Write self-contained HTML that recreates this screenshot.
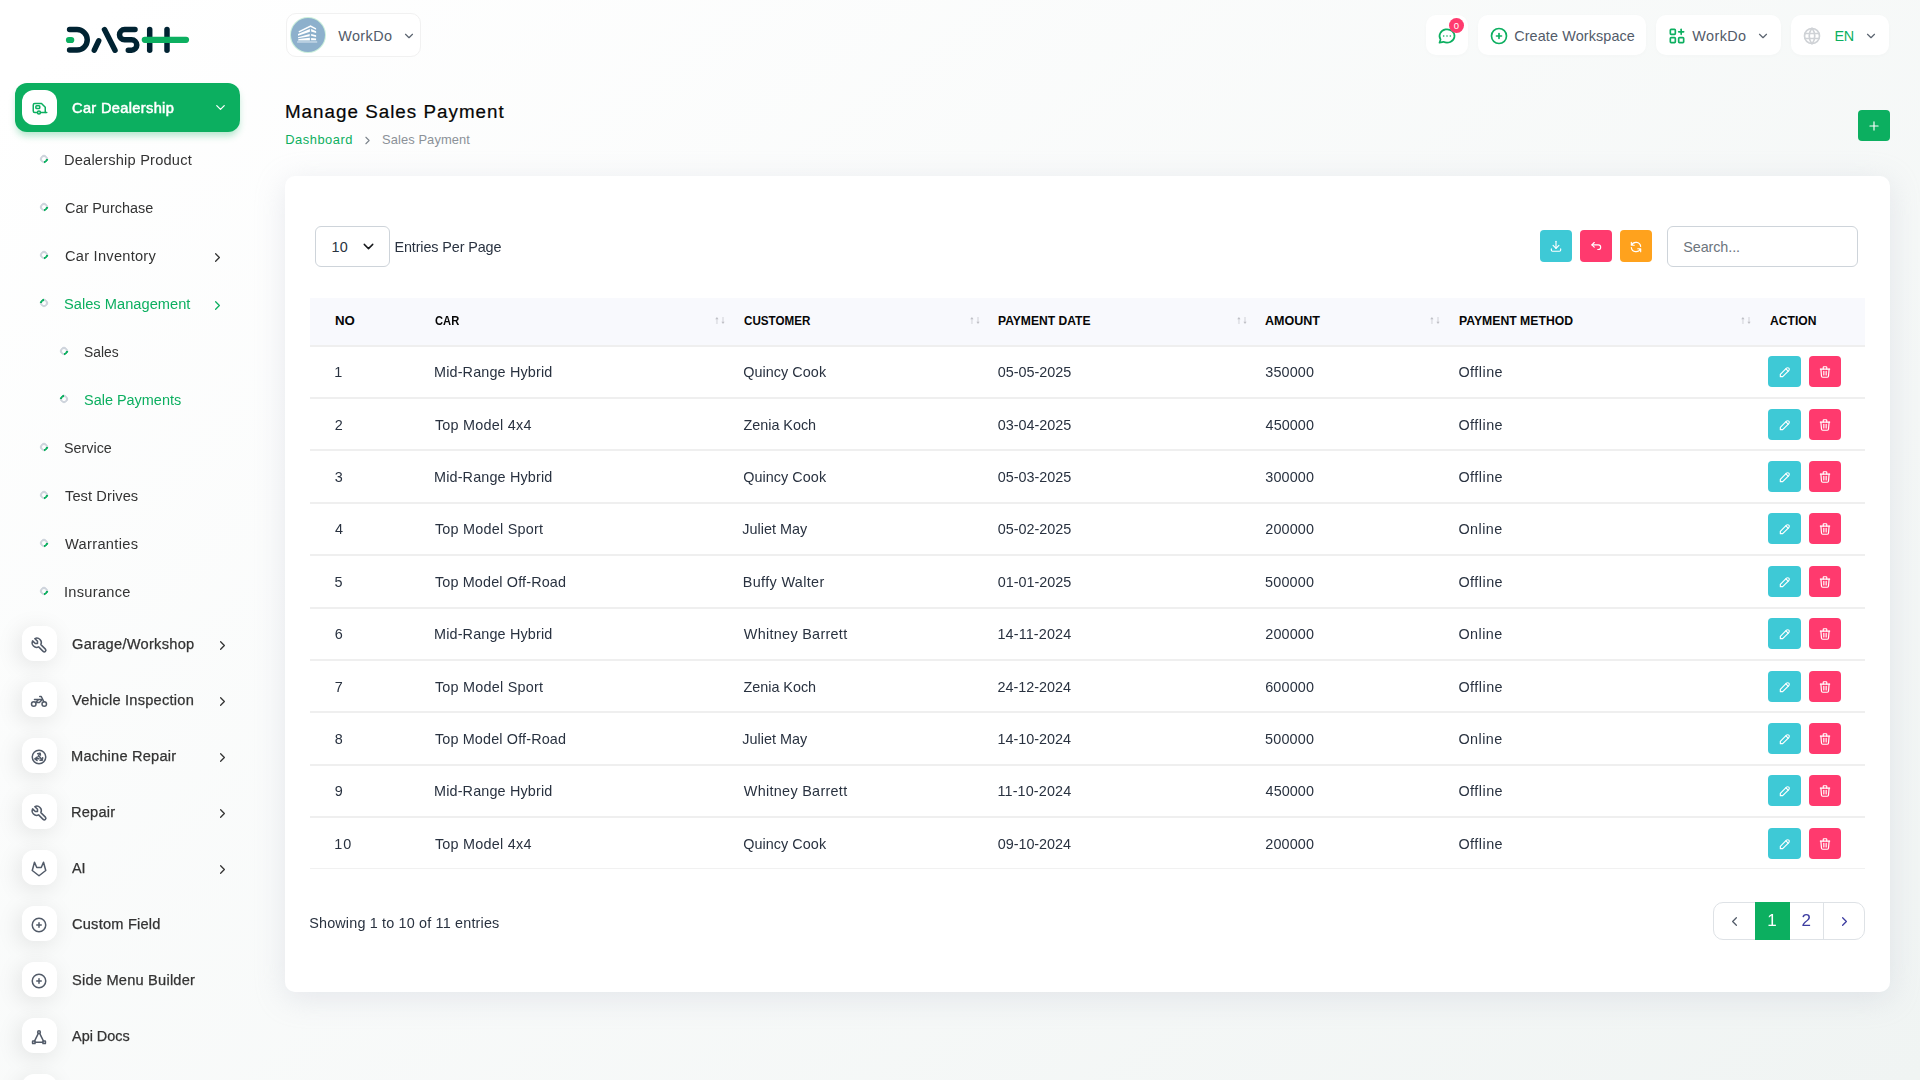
<!DOCTYPE html>
<html lang="en">
<head>
<meta charset="utf-8">
<title>Manage Sales Payment</title>
<style>
*{box-sizing:border-box;margin:0;padding:0}
html,body{width:1920px;height:1080px;overflow:hidden}
body{font-family:"Liberation Sans",sans-serif;font-size:14px;color:#293240;background:#fff;position:relative}
.bg{position:absolute;left:0;top:0;width:1920px;height:1080px;background:linear-gradient(141.55deg,rgba(240,244,243,0) 3.46%,#f0f4f3 99.86%)}
svg{display:block}
.ic{fill:none;stroke:currentColor;stroke-width:2;stroke-linecap:round;stroke-linejoin:round;position:absolute}
.t{position:absolute;white-space:nowrap;line-height:20px;height:20px;transform-origin:0 50%}
.logo{position:absolute;left:56px;top:16px}
.active-top{position:absolute;left:15px;top:83.4px;width:225px;height:48.2px;border-radius:12px;background:#0caf60;box-shadow:0 5px 7px -1px rgba(12,175,96,.3)}
.micon{position:absolute;left:22px;width:35px;height:35px;border-radius:12px;background:#fff;box-shadow:-3px 4px 23px rgba(0,0,0,.1);color:#525b69}
.nav-b{color:#333;font-size:14px;-webkit-text-stroke:.25px #333}
.nav-s{color:#333;font-size:14px}
.bul{position:absolute;width:8px;height:8px;border-radius:50%;border:2px solid #ced4dc;border-right-color:#0caf60;transform:rotate(45deg)}
.bul.on{transform:rotate(225deg)}
.green{color:#0caf60 !important}
.hbtn{position:absolute;top:14.6px;height:40.7px;border-radius:10px;background:#fff;box-shadow:0 1px 4px rgba(0,0,0,.02)}
.hd{color:#525b69;font-size:14.4px}
.card{position:absolute;left:285px;top:176px;width:1605px;height:816px;border-radius:10px;background:#fff;box-shadow:0 6px 30px rgba(182,186,203,.3)}
.sq{position:absolute;border-radius:4px;color:#fff}
.teal{background:#3ec9d6}.pink{background:#ff3a6e}.orange{background:#ffa21d}.gr{background:#0caf60}
.thead{position:absolute;left:310px;top:298px;width:1555px;height:47px;background:#f8f9fd}
.th{font-weight:bold;font-size:12px;color:#060606}
.line{position:absolute;left:310px;width:1555px;height:2px;background:#efefef}
.td{color:#293240;font-size:14.4px}
.sort{position:absolute}
</style>
</head>
<body>
<div class="bg"></div>
<!-- SIDEBAR -->
<div style="position:absolute;left:0;top:0;width:280px;height:1080px;will-change:transform">
<svg class="logo" width="144" height="48" viewBox="56 16 144 48" fill="none" stroke-linecap="round" stroke-linejoin="round">
<g stroke="#002332" stroke-width="5.5">
<path d="M69.6 29.6H77a10.25 10.25 0 0 1 0 20.5H69.6"/>
<path d="M98.7 40.8L94.3 50.2"/><path d="M104.5 29.6L115 50.2"/>
<path d="M135 29.6H124.6a5.1 5.1 0 0 0 0 10.2h7a5.2 5.2 0 0 1 0 10.4H128.3"/>
<path d="M149.7 29.6V50.2"/><path d="M167 29.6V50.2"/>
</g>
<g stroke="#0caf60" stroke-width="6.2"><path d="M69 40H71.2"/><path d="M144.8 39.8H186"/></g>
</svg>
<div class="active-top"></div>
<div class="micon" style="top:90px;box-shadow:none;color:#0caf60"><svg class="ic" viewBox="0 0 24 24" width="18" height="18" style="left:8.9px;top:9.1px;"><circle cx="10.6" cy="18" r="2"/><path d="M12.6 18H21"/><path d="M8.6 18H5a2 2 0 0 1 -2 -2V8a2 2 0 0 1 2 -2h9l5 5v7"/><rect x="6.5" y="9" width="5.2" height="3.5" rx="1"/></svg></div>
<div class="t nav-b" style="left:72.18px;top:97.8px;letter-spacing:0.311px;transform:scaleX(1.0450);color:#fff;-webkit-text-stroke:.5px #fff">Car Dealership</div>
<svg class="ic" viewBox="0 0 24 24" width="15" height="15" style="left:212.5px;top:100.0px;color:#fff"><path d="M6 9l6 6l6 -6"/></svg>
<div class="bul" style="left:40px;top:155px"></div>
<div class="t nav-s" style="left:64.34px;top:150.2px;letter-spacing:0.185px;transform:scaleX(1.0450);">Dealership Product</div>
<div class="bul" style="left:40px;top:203px"></div>
<div class="t nav-s" style="left:64.58px;top:198.2px;transform:scaleX(1.0299);">Car Purchase</div>
<div class="bul" style="left:40px;top:251px"></div>
<div class="t nav-s" style="left:64.57px;top:246.2px;letter-spacing:0.236px;transform:scaleX(1.0450);">Car Inventory</div>
<svg class="ic" viewBox="0 0 24 24" width="15" height="15" style="left:209.5px;top:249.5px;color:#333"><path d="M9 6l6 6l-6 6"/></svg>
<div class="bul on" style="left:40px;top:299px"></div>
<div class="t nav-s green" style="left:64.40px;top:294.2px;letter-spacing:0.021px;transform:scaleX(1.0450);">Sales Management</div>
<svg class="ic" viewBox="0 0 24 24" width="15" height="15" style="left:209.5px;top:297.5px;color:#0caf60"><path d="M9 6l6 6l-6 6"/></svg>
<div class="bul" style="left:60px;top:347px"></div>
<div class="t nav-s" style="left:84.43px;top:342.2px;transform:scaleX(0.9871);">Sales</div>
<div class="bul on" style="left:60px;top:395px"></div>
<div class="t nav-s green" style="left:84.42px;top:390.2px;transform:scaleX(1.0318);">Sale Payments</div>
<div class="bul" style="left:40px;top:443px"></div>
<div class="t nav-s" style="left:64.40px;top:438.2px;transform:scaleX(1.0237);">Service</div>
<div class="bul" style="left:40px;top:491px"></div>
<div class="t nav-s" style="left:65.18px;top:486.2px;letter-spacing:0.080px;transform:scaleX(1.0450);">Test Drives</div>
<div class="bul" style="left:40px;top:539px"></div>
<div class="t nav-s" style="left:65.31px;top:534.2px;letter-spacing:0.296px;transform:scaleX(1.0450);">Warranties</div>
<div class="bul" style="left:40px;top:587px"></div>
<div class="t nav-s" style="left:64.15px;top:582.2px;letter-spacing:0.265px;transform:scaleX(1.0450);">Insurance</div>
<div class="micon" style="top:626.1px"><svg class="ic" viewBox="0 0 24 24" width="18" height="18" style="left:8.4px;top:10.0px;"><path d="M7 10h3v-3l-3.5 -3.5a6 6 0 0 1 8 8l6 6a2 2 0 0 1 -3 3l-6 -6a6 6 0 0 1 -8 -8l3.5 3.5"/></svg></div>
<div class="t nav-b" style="left:71.77px;top:634.4px;letter-spacing:0.255px;transform:scaleX(1.0450);">Garage/Workshop</div>
<svg class="ic" viewBox="0 0 24 24" width="15" height="15" style="left:214.5px;top:637.5px;color:#333"><path d="M9 6l6 6l-6 6"/></svg>
<div class="micon" style="top:682.1px"><svg class="ic" viewBox="0 0 24 24" width="18" height="18" style="left:8.4px;top:10.0px;"><circle cx="5" cy="16" r="3"/><circle cx="19" cy="16" r="3"/><path d="M7.5 14h5l4 -4h-10.5m1.5 4l4 -4"/><path d="M13 6h2l1.5 3l2 4"/></svg></div>
<div class="t nav-b" style="left:72.48px;top:690.4px;letter-spacing:0.217px;transform:scaleX(1.0450);">Vehicle Inspection</div>
<svg class="ic" viewBox="0 0 24 24" width="15" height="15" style="left:214.5px;top:693.5px;color:#333"><path d="M9 6l6 6l-6 6"/></svg>
<div class="micon" style="top:738.1px"><svg class="ic" viewBox="0 0 24 24" width="18" height="18" style="left:8.4px;top:10.0px;"><circle cx="12" cy="12" r="9"/><path d="M10.5 12L13 7.4"/><path d="M10.2 7.6l3.3 -.7l.4 2.6" fill="currentColor"/><path d="M12.8 11.6L16 15.6"/><path d="M16.9 13l-.6 3.3l-3 .1" fill="currentColor"/><path d="M12 14.4H7"/><path d="M9.4 16.7L6.6 14.5l2.5 -2" fill="currentColor"/></svg></div>
<div class="t nav-b" style="left:71.47px;top:746.4px;letter-spacing:0.197px;transform:scaleX(1.0450);">Machine Repair</div>
<svg class="ic" viewBox="0 0 24 24" width="15" height="15" style="left:214.5px;top:749.5px;color:#333"><path d="M9 6l6 6l-6 6"/></svg>
<div class="micon" style="top:794.1px"><svg class="ic" viewBox="0 0 24 24" width="18" height="18" style="left:8.4px;top:10.0px;"><path d="M7 10h3v-3l-3.5 -3.5a6 6 0 0 1 8 8l6 6a2 2 0 0 1 -3 3l-6 -6a6 6 0 0 1 -8 -8l3.5 3.5"/></svg></div>
<div class="t nav-b" style="left:71.47px;top:802.4px;letter-spacing:0.180px;transform:scaleX(1.0450);">Repair</div>
<svg class="ic" viewBox="0 0 24 24" width="15" height="15" style="left:214.5px;top:805.5px;color:#333"><path d="M9 6l6 6l-6 6"/></svg>
<div class="micon" style="top:850.1px"><svg class="ic" viewBox="0 0 24 24" width="18" height="18" style="left:8.4px;top:10.0px;"><path d="M21 14l-9 7l-9 -7l3 -11l3 7h6l3 -7z"/></svg></div>
<div class="t nav-b" style="left:72.37px;top:858.4px;transform:scaleX(1.0255);">AI</div>
<svg class="ic" viewBox="0 0 24 24" width="15" height="15" style="left:214.5px;top:861.5px;color:#333"><path d="M9 6l6 6l-6 6"/></svg>
<div class="micon" style="top:906.1px"><svg class="ic" viewBox="0 0 24 24" width="18" height="18" style="left:8.4px;top:10.0px;"><circle cx="12" cy="12" r="9"/><path d="M9 12h6"/><path d="M12 9v6"/></svg></div>
<div class="t nav-b" style="left:71.77px;top:914.4px;letter-spacing:0.196px;transform:scaleX(1.0450);">Custom Field</div>
<div class="micon" style="top:962.1px"><svg class="ic" viewBox="0 0 24 24" width="18" height="18" style="left:8.4px;top:10.0px;"><circle cx="12" cy="12" r="9"/><path d="M9 12h6"/><path d="M12 9v6"/></svg></div>
<div class="t nav-b" style="left:71.56px;top:970.4px;letter-spacing:0.202px;transform:scaleX(1.0450);">Side Menu Builder</div>
<div class="micon" style="top:1018.1px"><svg class="ic" viewBox="0 0 24 24" width="18" height="18" style="left:8.4px;top:10.0px;"><circle cx="12" cy="5.5" r="1.8"/><rect x="3.4" y="17.4" width="3.4" height="3.4" rx=".6"/><rect x="17.2" y="17.4" width="3.4" height="3.4" rx=".6"/><path d="M6.2 17.2l4.9 -10"/><path d="M17.8 17.2l-4.9 -10"/><path d="M7 19.1h10"/></svg></div>
<div class="t nav-b" style="left:72.38px;top:1026.4px;transform:scaleX(1.0310);">Api Docs</div>
<div class="micon" style="top:1074.1px"></div>
</div>
<!-- HEADER -->
<div class="hbtn" style="left:285.5px;top:12.6px;width:135.5px;height:44.4px;border:1px solid #f1f1f1;box-shadow:none"></div>
<div style="position:absolute;left:291px;top:18px;width:34px;height:34px;border-radius:50%;background:#8db0cc;box-shadow:0 0 0 1px rgba(160,225,190,.55)"></div>
<svg style="position:absolute;left:285px;top:12px" width="50" height="46" viewBox="285 12 50 46" fill="#fff">
<path d="M298.5 31.2L310.55 25.3L316.1 28.2V29.7L310.55 26.9L299.1 32.5Z"/>
<path d="M298 34.1L309.9 29V31.8L298 35.7Z"/><path d="M298 37.3L309.7 33.9V36.3L298 38.3Z"/><path d="M298.5 39L309.9 37.8V40.4H298.1Z"/>
<path d="M311.1 29L316.1 31.2V33.1L311.1 31.4Z"/><path d="M311.1 33.9L316.1 35.2V36.9L311.1 35.85Z"/><path d="M311.1 38L316.1 38.4V40.2H311.1Z"/>
<rect x="297.1" y="40.9" width="20.1" height="2" fill="#b8cfe1"/>
</svg>
<div class="t hd" style="left:338.19px;top:25.7px;letter-spacing:0.413px;">WorkDo</div>
<svg class="ic" viewBox="0 0 24 24" width="14" height="14" style="left:401.75px;top:28.6px;color:#5b6470" stroke-width="1.7"><path d="M6 9l6 6l6 -6"/></svg>
<div class="hbtn" style="left:1426px;width:42px"></div>
<svg class="ic" viewBox="0 0 24 24" width="20" height="20" style="left:1437.2px;top:26.05px;color:#0caf60"><path d="M3 20l1.3 -3.9a9 8 0 1 1 3.4 2.9l-4.7 1"/><path d="M12 12v.01"/><path d="M8 12v.01"/><path d="M16 12v.01"/></svg>
<div style="position:absolute;left:1449px;top:17.5px;width:15px;height:15px;border-radius:50%;background:#ff3a6e;color:#fff;font-size:9.5px;line-height:15px;text-align:center">0</div>
<div class="hbtn" style="left:1478px;width:168px"></div>
<svg class="ic" viewBox="0 0 24 24" width="20" height="20" style="left:1489.2px;top:25.9px;color:#0caf60"><circle cx="12" cy="12" r="9"/><path d="M9 12h6"/><path d="M12 9v6"/></svg>
<div class="t hd" style="left:1514.18px;top:25.8px;letter-spacing:0.119px;">Create Workspace</div>
<div class="hbtn" style="left:1656px;width:125px"></div>
<svg class="ic" viewBox="0 0 24 24" width="20" height="20" style="left:1667.2px;top:25.9px;color:#0caf60"><rect x="4" y="4" width="6" height="6" rx="1"/><rect x="4" y="14" width="6" height="6" rx="1"/><rect x="14" y="14" width="6" height="6" rx="1"/><path d="M14 7h6"/><path d="M17 4v6"/></svg>
<div class="t hd" style="left:1692.33px;top:25.8px;letter-spacing:0.416px;">WorkDo</div>
<svg class="ic" viewBox="0 0 24 24" width="14" height="14" style="left:1756.15px;top:28.7px;color:#5b6470" stroke-width="1.7"><path d="M6 9l6 6l6 -6"/></svg>
<div class="hbtn" style="left:1791.3px;width:97.7px"></div>
<svg class="ic" viewBox="0 0 24 24" width="20" height="20" style="left:1802.1px;top:25.7px;color:#cfd2d6" stroke-width="2.1"><circle cx="12" cy="12" r="9"/><path d="M3.6 9h16.8"/><path d="M3.6 15h16.8"/><path d="M11.5 3a17 17 0 0 0 0 18"/><path d="M12.5 3a17 17 0 0 1 0 18"/></svg>
<div class="t hd green" style="left:1834.44px;top:25.8px;letter-spacing:-0.320px;">EN</div>
<svg class="ic" viewBox="0 0 24 24" width="14" height="14" style="left:1863.9px;top:28.7px;color:#5b6470" stroke-width="1.7"><path d="M6 9l6 6l6 -6"/></svg>
<!-- PAGE -->
<div class="t " style="left:284.90px;top:102.1px;letter-spacing:1.022px;font-size:18.8px;color:#060606;line-height:24px;height:24px;margin-top:-2px;-webkit-text-stroke:.22px #060606">Manage Sales Payment</div>
<div class="t green" style="left:285.20px;top:130.2px;letter-spacing:0.529px;font-size:12.9px">Dashboard</div>
<svg class="ic" viewBox="0 0 24 24" width="13" height="13" style="left:360.5px;top:133.6px;color:#7d848c" stroke-width="1.7"><path d="M9 6l6 6l-6 6"/></svg>
<div class="t " style="left:381.98px;top:130.2px;letter-spacing:0.104px;font-size:12.9px;color:#8b9198">Sales Payment</div>
<div class="sq gr" style="left:1858px;top:110px;width:32px;height:31px"><svg class="ic" viewBox="0 0 24 24" width="14" height="14" style="left:9.4px;top:8.9px;"><path d="M12 5v14"/><path d="M5 12h14"/></svg></div>
<div class="card"></div>
<div style="position:absolute;left:315px;top:226px;width:74.5px;height:40.5px;border:1px solid #ced4da;border-radius:6px;background:#fff"></div>
<div class="t td" style="left:331.58px;top:236.7px;letter-spacing:0.243px;">10</div>
<svg class="ic" viewBox="0 0 24 24" width="17" height="17" style="left:359.5px;top:238.0px;color:#16181b"><path d="M6 9l6 6l6 -6"/></svg>
<div class="t td" style="left:394.40px;top:236.7px;letter-spacing:-0.113px;">Entries Per Page</div>
<div class="sq teal" style="left:1540px;top:230px;width:32px;height:32px"><svg class="ic" viewBox="0 0 24 24" width="14" height="14" style="left:8.85px;top:9.2px;"><path d="M4 17v2a2 2 0 0 0 2 2h12a2 2 0 0 0 2 -2v-2"/><path d="M7 11l5 5l5 -5"/><path d="M12 4v12"/></svg></div>
<div class="sq pink" style="left:1580px;top:230px;width:32px;height:32px"><svg class="ic" viewBox="0 0 24 24" width="14" height="14" style="left:8.8px;top:9px;"><path d="M9 14l-4 -4l4 -4"/><path d="M5 10h11a4 4 0 1 1 0 8h-1"/></svg></div>
<div class="sq orange" style="left:1620px;top:230px;width:32px;height:32px"><svg class="ic" viewBox="0 0 24 24" width="14" height="14" style="left:8.6px;top:9.6px;"><path d="M20 11a8.1 8.1 0 0 0 -15.5 -2m-.5 -5v5h5"/><path d="M4 13a8.1 8.1 0 0 0 15.5 2m.5 5v-5h-5"/></svg></div>
<div style="position:absolute;left:1667px;top:226px;width:191px;height:41px;border:1px solid #ced4da;border-radius:6px;background:#fff"></div>
<div class="t td" style="left:1683.23px;top:237.0px;letter-spacing:-0.092px;color:#6c757d">Search...</div>
<div class="thead"></div>
<div class="t th" style="left:334.51px;top:310.8px;transform:scaleX(1.1058);">NO</div>
<div class="t th" style="left:434.69px;top:310.8px;transform:scaleX(0.9317);">CAR</div>
<div class="t th" style="left:744.01px;top:310.8px;transform:scaleX(0.9683);">CUSTOMER</div>
<div class="t th" style="left:997.88px;top:310.8px;transform:scaleX(1.0082);">PAYMENT DATE</div>
<div class="t th" style="left:1265.35px;top:310.8px;transform:scaleX(1.0450);">AMOUNT</div>
<div class="t th" style="left:1458.57px;top:310.8px;transform:scaleX(1.0181);">PAYMENT METHOD</div>
<div class="t th" style="left:1769.52px;top:310.8px;transform:scaleX(1.0087);">ACTION</div>
<svg class="sort" style="left:715.1px;top:316px" viewBox="0 0 10 9" width="10" height="9" fill="none" stroke-linecap="butt"><path d="M1.9 8V2.2" stroke="#e3e4e9" stroke-width="1.9"/><path d="M0.3 3.2L1.9 1.1L3.5 3.2Z" fill="#bfc0c6"/><path d="M8 1V6.8" stroke="#e3e4e9" stroke-width="1.9"/><path d="M6.4 5.8L8 7.9L9.6 5.8Z" fill="#bfc0c6"/></svg>
<svg class="sort" style="left:969.5px;top:316px" viewBox="0 0 10 9" width="10" height="9" fill="none" stroke-linecap="butt"><path d="M1.9 8V2.2" stroke="#e3e4e9" stroke-width="1.9"/><path d="M0.3 3.2L1.9 1.1L3.5 3.2Z" fill="#bfc0c6"/><path d="M8 1V6.8" stroke="#e3e4e9" stroke-width="1.9"/><path d="M6.4 5.8L8 7.9L9.6 5.8Z" fill="#bfc0c6"/></svg>
<svg class="sort" style="left:1236.5px;top:316px" viewBox="0 0 10 9" width="10" height="9" fill="none" stroke-linecap="butt"><path d="M1.9 8V2.2" stroke="#e3e4e9" stroke-width="1.9"/><path d="M0.3 3.2L1.9 1.1L3.5 3.2Z" fill="#bfc0c6"/><path d="M8 1V6.8" stroke="#e3e4e9" stroke-width="1.9"/><path d="M6.4 5.8L8 7.9L9.6 5.8Z" fill="#bfc0c6"/></svg>
<svg class="sort" style="left:1429.8px;top:316px" viewBox="0 0 10 9" width="10" height="9" fill="none" stroke-linecap="butt"><path d="M1.9 8V2.2" stroke="#e3e4e9" stroke-width="1.9"/><path d="M0.3 3.2L1.9 1.1L3.5 3.2Z" fill="#bfc0c6"/><path d="M8 1V6.8" stroke="#e3e4e9" stroke-width="1.9"/><path d="M6.4 5.8L8 7.9L9.6 5.8Z" fill="#bfc0c6"/></svg>
<svg class="sort" style="left:1741.3px;top:316px" viewBox="0 0 10 9" width="10" height="9" fill="none" stroke-linecap="butt"><path d="M1.9 8V2.2" stroke="#e3e4e9" stroke-width="1.9"/><path d="M0.3 3.2L1.9 1.1L3.5 3.2Z" fill="#bfc0c6"/><path d="M8 1V6.8" stroke="#e3e4e9" stroke-width="1.9"/><path d="M6.4 5.8L8 7.9L9.6 5.8Z" fill="#bfc0c6"/></svg>
<div class="line" style="top:345px"></div>
<div class="line" style="top:397px"></div>
<div class="line" style="top:449px"></div>
<div class="line" style="top:502px"></div>
<div class="line" style="top:554px"></div>
<div class="line" style="top:607px"></div>
<div class="line" style="top:659px"></div>
<div class="line" style="top:711px"></div>
<div class="line" style="top:764px"></div>
<div class="line" style="top:816px"></div>
<div class="line" style="top:868px;height:1px;background:#f1f1f1"></div>
<div class="t td" style="left:334.34px;top:362.1px;">1</div>
<div class="t td" style="left:434.00px;top:362.1px;letter-spacing:0.153px;">Mid-Range Hybrid</div>
<div class="t td" style="left:743.16px;top:362.1px;letter-spacing:0.054px;">Quincy Cook</div>
<div class="t td" style="left:997.79px;top:362.1px;letter-spacing:-0.020px;">05-05-2025</div>
<div class="t td" style="left:1265.25px;top:362.1px;letter-spacing:0.133px;">350000</div>
<div class="t td" style="left:1458.40px;top:362.1px;letter-spacing:0.483px;">Offline</div>
<div class="sq teal" style="left:1768px;top:356.0px;width:33px;height:31px"><svg class="ic" viewBox="0 0 24 24" width="14" height="14" style="left:9.5px;top:8.9px;"><path d="M4 20h4l10.5 -10.5a2.828 2.828 0 1 0 -4 -4l-10.5 10.5v4"/><path d="M13.5 6.5l4 4"/></svg></div>
<div class="sq pink" style="left:1809px;top:356.0px;width:32px;height:31px"><svg class="ic" viewBox="0 0 24 24" width="14" height="14" style="left:9px;top:8.6px;"><path d="M4 7h16"/><path d="M10 11v6"/><path d="M14 11v6"/><path d="M5 7l1 12a2 2 0 0 0 2 2h8a2 2 0 0 0 2 -2l1 -12"/><path d="M9 7v-3a1 1 0 0 1 1 -1h4a1 1 0 0 1 1 1v3"/></svg></div>
<div class="t td" style="left:334.80px;top:415.1px;">2</div>
<div class="t td" style="left:434.88px;top:415.1px;letter-spacing:0.243px;">Top Model 4x4</div>
<div class="t td" style="left:743.52px;top:415.1px;letter-spacing:-0.025px;">Zenia Koch</div>
<div class="t td" style="left:997.79px;top:415.1px;letter-spacing:-0.020px;">03-04-2025</div>
<div class="t td" style="left:1265.60px;top:415.1px;letter-spacing:0.063px;">450000</div>
<div class="t td" style="left:1458.40px;top:415.1px;letter-spacing:0.483px;">Offline</div>
<div class="sq teal" style="left:1768px;top:409.0px;width:33px;height:31px"><svg class="ic" viewBox="0 0 24 24" width="14" height="14" style="left:9.5px;top:8.9px;"><path d="M4 20h4l10.5 -10.5a2.828 2.828 0 1 0 -4 -4l-10.5 10.5v4"/><path d="M13.5 6.5l4 4"/></svg></div>
<div class="sq pink" style="left:1809px;top:409.0px;width:32px;height:31px"><svg class="ic" viewBox="0 0 24 24" width="14" height="14" style="left:9px;top:8.6px;"><path d="M4 7h16"/><path d="M10 11v6"/><path d="M14 11v6"/><path d="M5 7l1 12a2 2 0 0 0 2 2h8a2 2 0 0 0 2 -2l1 -12"/><path d="M9 7v-3a1 1 0 0 1 1 -1h4a1 1 0 0 1 1 1v3"/></svg></div>
<div class="t td" style="left:334.74px;top:467.1px;">3</div>
<div class="t td" style="left:434.00px;top:467.1px;letter-spacing:0.153px;">Mid-Range Hybrid</div>
<div class="t td" style="left:743.16px;top:467.1px;letter-spacing:0.054px;">Quincy Cook</div>
<div class="t td" style="left:997.79px;top:467.1px;letter-spacing:-0.020px;">05-03-2025</div>
<div class="t td" style="left:1265.25px;top:467.1px;letter-spacing:0.133px;">300000</div>
<div class="t td" style="left:1458.40px;top:467.1px;letter-spacing:0.483px;">Offline</div>
<div class="sq teal" style="left:1768px;top:461.0px;width:33px;height:31px"><svg class="ic" viewBox="0 0 24 24" width="14" height="14" style="left:9.5px;top:8.9px;"><path d="M4 20h4l10.5 -10.5a2.828 2.828 0 1 0 -4 -4l-10.5 10.5v4"/><path d="M13.5 6.5l4 4"/></svg></div>
<div class="sq pink" style="left:1809px;top:461.0px;width:32px;height:31px"><svg class="ic" viewBox="0 0 24 24" width="14" height="14" style="left:9px;top:8.6px;"><path d="M4 7h16"/><path d="M10 11v6"/><path d="M14 11v6"/><path d="M5 7l1 12a2 2 0 0 0 2 2h8a2 2 0 0 0 2 -2l1 -12"/><path d="M9 7v-3a1 1 0 0 1 1 -1h4a1 1 0 0 1 1 1v3"/></svg></div>
<div class="t td" style="left:335.03px;top:519.1px;">4</div>
<div class="t td" style="left:434.88px;top:519.1px;letter-spacing:0.242px;">Top Model Sport</div>
<div class="t td" style="left:742.31px;top:519.1px;">Juliet May</div>
<div class="t td" style="left:997.79px;top:519.1px;letter-spacing:-0.020px;">05-02-2025</div>
<div class="t td" style="left:1265.30px;top:519.1px;letter-spacing:0.123px;">200000</div>
<div class="t td" style="left:1458.40px;top:519.1px;letter-spacing:0.460px;">Online</div>
<div class="sq teal" style="left:1768px;top:513.0px;width:33px;height:31px"><svg class="ic" viewBox="0 0 24 24" width="14" height="14" style="left:9.5px;top:8.9px;"><path d="M4 20h4l10.5 -10.5a2.828 2.828 0 1 0 -4 -4l-10.5 10.5v4"/><path d="M13.5 6.5l4 4"/></svg></div>
<div class="sq pink" style="left:1809px;top:513.0px;width:32px;height:31px"><svg class="ic" viewBox="0 0 24 24" width="14" height="14" style="left:9px;top:8.6px;"><path d="M4 7h16"/><path d="M10 11v6"/><path d="M14 11v6"/><path d="M5 7l1 12a2 2 0 0 0 2 2h8a2 2 0 0 0 2 -2l1 -12"/><path d="M9 7v-3a1 1 0 0 1 1 -1h4a1 1 0 0 1 1 1v3"/></svg></div>
<div class="t td" style="left:334.59px;top:572.1px;">5</div>
<div class="t td" style="left:434.88px;top:572.1px;letter-spacing:0.153px;">Top Model Off-Road</div>
<div class="t td" style="left:742.80px;top:572.1px;letter-spacing:0.354px;">Buffy Walter</div>
<div class="t td" style="left:997.79px;top:572.1px;letter-spacing:-0.020px;">01-01-2025</div>
<div class="t td" style="left:1265.07px;top:572.1px;letter-spacing:0.169px;">500000</div>
<div class="t td" style="left:1458.40px;top:572.1px;letter-spacing:0.483px;">Offline</div>
<div class="sq teal" style="left:1768px;top:566.0px;width:33px;height:31px"><svg class="ic" viewBox="0 0 24 24" width="14" height="14" style="left:9.5px;top:8.9px;"><path d="M4 20h4l10.5 -10.5a2.828 2.828 0 1 0 -4 -4l-10.5 10.5v4"/><path d="M13.5 6.5l4 4"/></svg></div>
<div class="sq pink" style="left:1809px;top:566.0px;width:32px;height:31px"><svg class="ic" viewBox="0 0 24 24" width="14" height="14" style="left:9px;top:8.6px;"><path d="M4 7h16"/><path d="M10 11v6"/><path d="M14 11v6"/><path d="M5 7l1 12a2 2 0 0 0 2 2h8a2 2 0 0 0 2 -2l1 -12"/><path d="M9 7v-3a1 1 0 0 1 1 -1h4a1 1 0 0 1 1 1v3"/></svg></div>
<div class="t td" style="left:334.78px;top:624.1px;">6</div>
<div class="t td" style="left:434.00px;top:624.1px;letter-spacing:0.153px;">Mid-Range Hybrid</div>
<div class="t td" style="left:743.80px;top:624.1px;letter-spacing:0.300px;">Whitney Barrett</div>
<div class="t td" style="left:997.46px;top:624.1px;letter-spacing:0.133px;">14-11-2024</div>
<div class="t td" style="left:1265.30px;top:624.1px;letter-spacing:0.123px;">200000</div>
<div class="t td" style="left:1458.40px;top:624.1px;letter-spacing:0.460px;">Online</div>
<div class="sq teal" style="left:1768px;top:618.0px;width:33px;height:31px"><svg class="ic" viewBox="0 0 24 24" width="14" height="14" style="left:9.5px;top:8.9px;"><path d="M4 20h4l10.5 -10.5a2.828 2.828 0 1 0 -4 -4l-10.5 10.5v4"/><path d="M13.5 6.5l4 4"/></svg></div>
<div class="sq pink" style="left:1809px;top:618.0px;width:32px;height:31px"><svg class="ic" viewBox="0 0 24 24" width="14" height="14" style="left:9px;top:8.6px;"><path d="M4 7h16"/><path d="M10 11v6"/><path d="M14 11v6"/><path d="M5 7l1 12a2 2 0 0 0 2 2h8a2 2 0 0 0 2 -2l1 -12"/><path d="M9 7v-3a1 1 0 0 1 1 -1h4a1 1 0 0 1 1 1v3"/></svg></div>
<div class="t td" style="left:334.80px;top:677.1px;">7</div>
<div class="t td" style="left:434.88px;top:677.1px;letter-spacing:0.242px;">Top Model Sport</div>
<div class="t td" style="left:743.52px;top:677.1px;letter-spacing:-0.025px;">Zenia Koch</div>
<div class="t td" style="left:997.60px;top:677.1px;letter-spacing:-0.029px;">24-12-2024</div>
<div class="t td" style="left:1265.23px;top:677.1px;letter-spacing:0.136px;">600000</div>
<div class="t td" style="left:1458.40px;top:677.1px;letter-spacing:0.483px;">Offline</div>
<div class="sq teal" style="left:1768px;top:671.0px;width:33px;height:31px"><svg class="ic" viewBox="0 0 24 24" width="14" height="14" style="left:9.5px;top:8.9px;"><path d="M4 20h4l10.5 -10.5a2.828 2.828 0 1 0 -4 -4l-10.5 10.5v4"/><path d="M13.5 6.5l4 4"/></svg></div>
<div class="sq pink" style="left:1809px;top:671.0px;width:32px;height:31px"><svg class="ic" viewBox="0 0 24 24" width="14" height="14" style="left:9px;top:8.6px;"><path d="M4 7h16"/><path d="M10 11v6"/><path d="M14 11v6"/><path d="M5 7l1 12a2 2 0 0 0 2 2h8a2 2 0 0 0 2 -2l1 -12"/><path d="M9 7v-3a1 1 0 0 1 1 -1h4a1 1 0 0 1 1 1v3"/></svg></div>
<div class="t td" style="left:334.80px;top:729.1px;">8</div>
<div class="t td" style="left:434.88px;top:729.1px;letter-spacing:0.153px;">Top Model Off-Road</div>
<div class="t td" style="left:742.31px;top:729.1px;">Juliet May</div>
<div class="t td" style="left:997.46px;top:729.1px;">14-10-2024</div>
<div class="t td" style="left:1265.07px;top:729.1px;letter-spacing:0.169px;">500000</div>
<div class="t td" style="left:1458.40px;top:729.1px;letter-spacing:0.460px;">Online</div>
<div class="sq teal" style="left:1768px;top:723.0px;width:33px;height:31px"><svg class="ic" viewBox="0 0 24 24" width="14" height="14" style="left:9.5px;top:8.9px;"><path d="M4 20h4l10.5 -10.5a2.828 2.828 0 1 0 -4 -4l-10.5 10.5v4"/><path d="M13.5 6.5l4 4"/></svg></div>
<div class="sq pink" style="left:1809px;top:723.0px;width:32px;height:31px"><svg class="ic" viewBox="0 0 24 24" width="14" height="14" style="left:9px;top:8.6px;"><path d="M4 7h16"/><path d="M10 11v6"/><path d="M14 11v6"/><path d="M5 7l1 12a2 2 0 0 0 2 2h8a2 2 0 0 0 2 -2l1 -12"/><path d="M9 7v-3a1 1 0 0 1 1 -1h4a1 1 0 0 1 1 1v3"/></svg></div>
<div class="t td" style="left:334.78px;top:781.1px;">9</div>
<div class="t td" style="left:434.00px;top:781.1px;letter-spacing:0.153px;">Mid-Range Hybrid</div>
<div class="t td" style="left:743.80px;top:781.1px;letter-spacing:0.300px;">Whitney Barrett</div>
<div class="t td" style="left:997.46px;top:781.1px;letter-spacing:0.133px;">11-10-2024</div>
<div class="t td" style="left:1265.60px;top:781.1px;letter-spacing:0.063px;">450000</div>
<div class="t td" style="left:1458.40px;top:781.1px;letter-spacing:0.483px;">Offline</div>
<div class="sq teal" style="left:1768px;top:775.0px;width:33px;height:31px"><svg class="ic" viewBox="0 0 24 24" width="14" height="14" style="left:9.5px;top:8.9px;"><path d="M4 20h4l10.5 -10.5a2.828 2.828 0 1 0 -4 -4l-10.5 10.5v4"/><path d="M13.5 6.5l4 4"/></svg></div>
<div class="sq pink" style="left:1809px;top:775.0px;width:32px;height:31px"><svg class="ic" viewBox="0 0 24 24" width="14" height="14" style="left:9px;top:8.6px;"><path d="M4 7h16"/><path d="M10 11v6"/><path d="M14 11v6"/><path d="M5 7l1 12a2 2 0 0 0 2 2h8a2 2 0 0 0 2 -2l1 -12"/><path d="M9 7v-3a1 1 0 0 1 1 -1h4a1 1 0 0 1 1 1v3"/></svg></div>
<div class="t td" style="left:334.34px;top:834.1px;letter-spacing:0.861px;">10</div>
<div class="t td" style="left:434.88px;top:834.1px;letter-spacing:0.243px;">Top Model 4x4</div>
<div class="t td" style="left:743.16px;top:834.1px;letter-spacing:0.054px;">Quincy Cook</div>
<div class="t td" style="left:997.79px;top:834.1px;letter-spacing:-0.050px;">09-10-2024</div>
<div class="t td" style="left:1265.30px;top:834.1px;letter-spacing:0.123px;">200000</div>
<div class="t td" style="left:1458.40px;top:834.1px;letter-spacing:0.483px;">Offline</div>
<div class="sq teal" style="left:1768px;top:828.0px;width:33px;height:31px"><svg class="ic" viewBox="0 0 24 24" width="14" height="14" style="left:9.5px;top:8.9px;"><path d="M4 20h4l10.5 -10.5a2.828 2.828 0 1 0 -4 -4l-10.5 10.5v4"/><path d="M13.5 6.5l4 4"/></svg></div>
<div class="sq pink" style="left:1809px;top:828.0px;width:32px;height:31px"><svg class="ic" viewBox="0 0 24 24" width="14" height="14" style="left:9px;top:8.6px;"><path d="M4 7h16"/><path d="M10 11v6"/><path d="M14 11v6"/><path d="M5 7l1 12a2 2 0 0 0 2 2h8a2 2 0 0 0 2 -2l1 -12"/><path d="M9 7v-3a1 1 0 0 1 1 -1h4a1 1 0 0 1 1 1v3"/></svg></div>
<div class="t td" style="left:309.19px;top:912.9px;letter-spacing:0.170px;">Showing 1 to 10 of 11 entries</div>
<div style="position:absolute;left:1713px;top:902px;width:152px;height:38px;border:1px solid #dee2e6;border-radius:10px;background:#fff"></div>
<div style="position:absolute;left:1755px;top:902px;width:35px;height:38px;background:#0caf60"></div>
<div style="position:absolute;left:1823px;top:902px;width:1px;height:38px;background:#dee2e6"></div>
<svg class="ic" viewBox="0 0 24 24" width="15" height="15" style="left:1727.0px;top:913.5px;color:#525b69"><path d="M15 6l-6 6l6 6"/></svg>
<svg class="ic" viewBox="0 0 24 24" width="15" height="15" style="left:1836.5px;top:913.5px;color:#3b3ba0"><path d="M9 6l6 6l-6 6"/></svg>
<div class="t " style="left:1767.34px;top:911.4px;font-size:17px;color:#fff">1</div>
<div class="t " style="left:1801.39px;top:911.4px;font-size:17px;color:#3b3ba0">2</div>
</body>
</html>
